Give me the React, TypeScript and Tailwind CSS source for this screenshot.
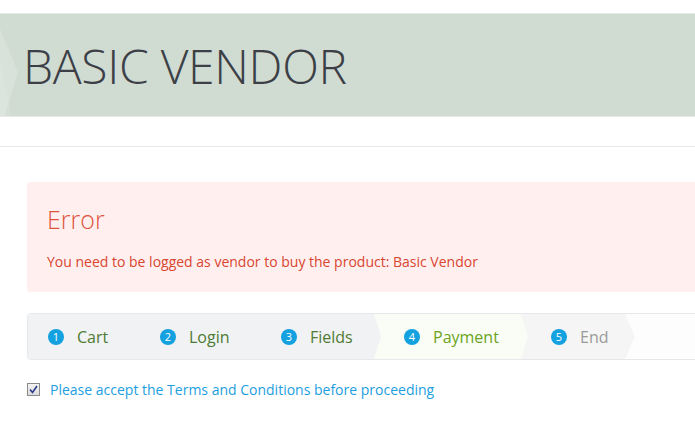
import React from 'react';

const steps = [
  { n: 1, label: 'Cart', w: 112, bg: 'bg-[#f0f2f4]', text: 'text-[#4f7a33]' },
  { n: 2, label: 'Login', w: 131, bg: 'bg-[#f0f2f4]', text: 'text-[#4f7a33]' },
  { n: 3, label: 'Fields', w: 133, bg: 'bg-[#f0f2f4]', text: 'text-[#4f7a33]' },
  { n: 4, label: 'Payment', w: 157, bg: 'bg-[#fafcf6]', text: 'text-[#6ba51c]' },
  { n: 5, label: 'End', w: 114, bg: 'bg-[#f4f5f4]', text: 'text-[#9a9a9a]' },
];

function Step({ n, label, w, bg, text, first }: { n: number; label: string; w: number; bg: string; text: string; first: boolean }) {
  return (
    <div
      className={`${bg} h-full flex items-center shrink-0 ${first ? 'pl-[20px]' : 'pl-[30px] -ml-[10px]'}`}
      style={{
        width: w,
        clipPath: first
          ? 'polygon(0 0, calc(100% - 10px) 0, 100% 50%, calc(100% - 10px) 100%, 0 100%)'
          : 'polygon(0 0, calc(100% - 10px) 0, 100% 50%, calc(100% - 10px) 100%, 0 100%, 7px 50%)',
      }}
    >
      <span className="w-4 h-4 rounded-full bg-[#14a1e0] text-white text-[11px] leading-none flex items-center justify-center mr-[13px]">
        {n}
      </span>
      <span className={`${text} text-[16px]`}>{label}</span>
    </div>
  );
}

export default function App() {
  return (
    <div className="w-[695px] h-[439px] overflow-hidden bg-white font-['Open_Sans',sans-serif]">
      <div className="h-[13px]" />
      <div className="relative h-[104px] bg-[#d0dbd2] border-y border-[#e6e9e6] flex items-center overflow-hidden">
        <svg className="absolute left-0 top-0" width="60" height="104" viewBox="0 0 60 104">
          <polygon points="0,15 18,58 4,104 0,104" fill="#ffffff" fillOpacity="0.18" />
          <polygon points="0,50 12,104 0,104" fill="#ffffff" fillOpacity="0.12" />
        </svg>
        <h1 className="relative pl-[23px] text-[48px] font-light text-[#3c4046] leading-none tracking-[-0.3px] mt-[2px]">
          BASIC VENDOR
        </h1>
      </div>
      <div className="h-[29px]" />
      <div className="border-t border-[#e8e8e8]" />
      <div className="pl-[27px] pt-[35px]">
        <div className="w-[700px] h-[110px] bg-[#fff0ef] rounded-l-[3px] pl-[20px] pt-[20px]">
          <div className="text-[25px] font-light text-[#e0533d] leading-[34px]">Error</div>
          <div className="text-[14px] text-[#d9452f] mt-[15px]">
            You need to be logged as vendor to buy the product: Basic Vendor
          </div>
        </div>
        <div className="mt-[21px] w-[700px] h-[47px] border border-[#e6e8ea] rounded-[4px] bg-[#fdfdfd] flex overflow-hidden">
          {steps.map((s, i) => (
            <Step key={s.n} {...s} first={i === 0} />
          ))}
        </div>
        <label className="flex items-center mt-[19px]">
          <span className="w-[13px] h-[13px] border border-[#8a8a8a] bg-gradient-to-b from-[#f4f4f4] to-[#dcdcdc] flex items-center justify-center">
            <svg width="9" height="9" viewBox="0 0 9 9">
              <path d="M1 4.5 L3.5 7.5 L8 1" stroke="#2b3a8c" strokeWidth="1.6" fill="none" />
            </svg>
          </span>
          <span className="ml-[10px] text-[14px] text-[#1c9ee0]">
            Please accept the Terms and Conditions before proceeding
          </span>
        </label>
      </div>
    </div>
  );
}
